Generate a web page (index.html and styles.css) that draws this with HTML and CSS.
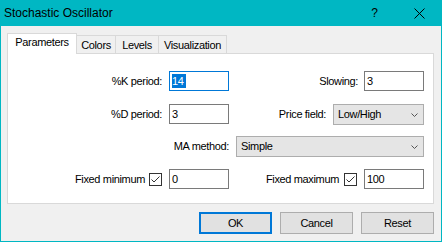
FILE: index.html
```html
<!DOCTYPE html>
<html>
<head>
<meta charset="utf-8">
<title>Stochastic Oscillator</title>
<link rel="stylesheet" href="styles.css">
</head>
<body>
<div class="window">
  <div class="titlebar">
    <span class="title">Stochastic Oscillator</span>
    <span class="cap-btn help">?</span>
    <span class="cap-btn close">
      <svg width="11" height="11" viewBox="0 0 11 11"><path d="M0.5 0.5 L10.5 10.5 M10.5 0.5 L0.5 10.5" stroke="#000" stroke-width="1" fill="none"/></svg>
    </span>
  </div>
  <div class="client">
    <div class="tabs">
      <div class="tab active t-params">Parameters</div>
      <div class="tab t-colors">Colors</div>
      <div class="tab t-levels">Levels</div>
      <div class="tab t-vis">Visualization</div>
    </div>
    <div class="panel">
      <div class="row">
        <span class="lbl lead">%K period:</span>
        <div class="field focus"><span class="sel">14</span></div>
        <span class="lbl grow g6">Slowing:</span>
        <div class="field">3</div>
      </div>
      <div class="row">
        <span class="lbl lead">%D period:</span>
        <div class="field">3</div>
        <span class="lbl grow g7">Price field:</span>
        <div class="select price"><span>Low/High</span><svg class="chev" width="7" height="4" viewBox="0 0 7 4"><polyline points="0.5,0.5 3.5,3.5 6.5,0.5" fill="none" stroke="#555" stroke-width="1"/></svg></div>
      </div>
      <div class="row ma">
        <span class="lbl lead-wide">MA method:</span>
        <div class="select wide"><span>Simple</span><svg class="chev" width="7" height="4" viewBox="0 0 7 4"><polyline points="0.5,0.5 3.5,3.5 6.5,0.5" fill="none" stroke="#555" stroke-width="1"/></svg></div>
      </div>
      <div class="row">
        <span class="lbl lead-check">Fixed minimum</span>
        <span class="check"><svg width="11" height="11" viewBox="0 0 11 11"><polyline points="1.5,5.5 4,8 9.5,2.5" fill="none" stroke="#333" stroke-width="1"/></svg></span>
        <div class="field">0</div>
        <span class="lbl grow g5">Fixed maximum</span>
        <span class="check"><svg width="11" height="11" viewBox="0 0 11 11"><polyline points="1.5,5.5 4,8 9.5,2.5" fill="none" stroke="#333" stroke-width="1"/></svg></span>
        <div class="field">100</div>
      </div>
    </div>
    <div class="buttons">
      <div class="btn default">OK</div>
      <div class="btn">Cancel</div>
      <div class="btn">Reset</div>
    </div>
  </div>
</div>
</body>
</html>
```
FILE: styles.css
```css
* { box-sizing: border-box; }
html, body { margin: 0; padding: 0; }
body {
  width: 442px;
  height: 242px;
  overflow: hidden;
  font-family: "Liberation Sans", Arial, sans-serif;
  font-size: 11px;
  letter-spacing: -0.35px;
  color: #000;
  background: #fff;
}
.window {
  width: 442px;
  height: 242px;
  border: 1px solid #00b7c3;
  border-top: 0;
  background: #f0f0f0;
  display: flex;
  flex-direction: column;
}
.titlebar {
  height: 26px;
  background: #00b7c3;
  display: flex;
  align-items: center;
  margin: 0 -1px;
  padding-left: 4px;
}
.title {
  flex: 1;
  font-size: 12px;
  letter-spacing: 0;
}
.cap-btn {
  width: 46px;
  height: 26px;
  display: flex;
  align-items: center;
  justify-content: center;
}
.help {
  font-size: 12px;
  letter-spacing: 0;
  padding-left: 3px;
}
.close svg { display: block; }

.client {
  flex: 1;
  padding: 7px 7px 0 6px;
  display: flex;
  flex-direction: column;
}
.tabs {
  display: flex;
  align-items: flex-end;
  height: 20px;
  position: relative;
  z-index: 1;
}
.tab {
  height: 18px;
  border: 1px solid #d9d9d9;
  border-bottom: 0;
  background: #f0f0f0;
  text-align: center;
  padding-top: 3px;
  line-height: 13px;
  margin-left: -1px;
  white-space: nowrap;
}
.tab.active {
  height: 21px;
  margin-bottom: -1px;
  margin-left: 0;
  background: #fff;
  padding-top: 2px;
}
.t-params { width: 70px; }
.t-colors { width: 40px; }
.t-levels { width: 44px; }
.t-vis { width: 69px; }

.panel {
  height: 151px;
  border: 1px solid #d9d9d9;
  background: #fff;
  padding: 17px 9px 0 0;
  display: flex;
  flex-direction: column;
  gap: 12px;
}
.row {
  display: flex;
  align-items: flex-start;
  height: 21px;
}
.row.ma { margin-top: -1px; }
.lbl {
  line-height: 20px;
  text-align: right;
  white-space: nowrap;
}
.lead { width: 154px; margin-right: 7px; }
.lead-wide { width: 221px; margin-right: 7px; }
.lead-check { width: 137px; margin-right: 4px; }
.grow { flex: 1; }
.g5 { margin-right: 5px; }
.g6 { margin-right: 6px; }
.g7 { margin-right: 7px; }

.field {
  width: 60px;
  height: 20px;
  border: 1px solid #7a7a7a;
  background: #fff;
  padding-left: 2px;
  line-height: 18px;
  white-space: nowrap;
}
.field.focus { border-color: #0078d7; }
.sel {
  display: inline-block;
  vertical-align: top;
  margin-top: 2px;
  line-height: 14px;
  background: #0078d7;
  color: #fff;
  padding-right: 2px;
}
.select {
  height: 21px;
  border: 1px solid #adadad;
  background: #e5e5e5;
  padding: 0 5px 0 4px;
  line-height: 19px;
  display: flex;
  align-items: center;
  justify-content: space-between;
}
.select.price { width: 91px; }
.select.wide { flex: 1; }
.chev { display: block; }
.check {
  width: 13px;
  height: 13px;
  margin-top: 4px;
  margin-right: 7px;
  border: 1px solid #333;
  background: #fff;
  display: block;
}
.check svg { display: block; }

.buttons {
  display: flex;
  justify-content: flex-end;
  gap: 8px;
  margin-top: 8px;
}
.btn {
  width: 73px;
  height: 22px;
  border: 1px solid #adadad;
  background: #e1e1e1;
  text-align: center;
  line-height: 20px;
}
.btn.default {
  border: 2px solid #0078d7;
  line-height: 18px;
}
```
